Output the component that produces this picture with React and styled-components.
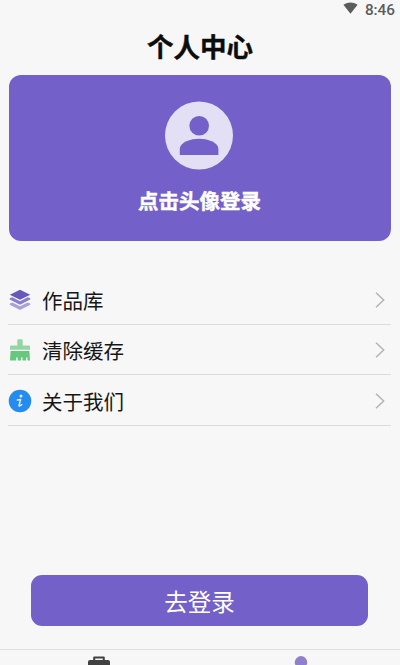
import React from "react";
import styled, { createGlobalStyle } from "styled-components";

const GlobalStyle = createGlobalStyle`
  * {
    box-sizing: border-box;
  }

  body {
    margin: 0;
    background: #f7f7f7;
    font-family: "Roboto", "Noto Sans CJK SC", sans-serif;
  }
`;

const Screen = styled.div`
  width: 400px;
  height: 665px;
  overflow: hidden;
  display: flex;
  flex-direction: column;
  background: #f7f7f7;
`;

const StatusBar = styled.div`
  height: 18px;
  flex-shrink: 0;
  display: flex;
  align-items: center;
  justify-content: flex-end;
  gap: 7px;
  padding-top: 1px;
  padding-right: 5px;
  color: #5c5c5c;
  font-size: 15.3px;
  font-weight: 500;
  line-height: 18px;

  svg {
    display: block;
    margin-bottom: 3px;
  }
`;

const Title = styled.h1`
  height: 57px;
  flex-shrink: 0;
  margin: 0;
  color: #0c0c0c;
  font-family: "Noto Sans CJK SC", sans-serif;
  font-size: 26.5px;
  font-weight: 700;
  line-height: 55px;
  text-align: center;
  -webkit-text-stroke: 0.4px currentColor;
`;

const ProfileCard = styled.div`
  height: 166px;
  flex-shrink: 0;
  margin: 0 9.5px 0 8.5px;
  padding-top: 26px;
  padding-right: 1px;
  display: flex;
  flex-direction: column;
  align-items: center;
  border-radius: 12px;
  background: #7361c9;

  svg {
    display: block;
  }
`;

const LoginHint = styled.div`
  margin-top: 15px;
  margin-left: 1px;
  color: #fff;
  font-family: "Noto Sans CJK SC", sans-serif;
  font-size: 20.5px;
  font-weight: 700;
  line-height: 30px;
  -webkit-text-stroke: 0.4px currentColor;
`;

const Menu = styled.div`
  flex-shrink: 0;
  margin: 33px 9px 0 8px;
`;

const MenuRow = styled.div`
  height: 50.5px;
  display: flex;
  align-items: center;
  padding-top: 2px;
  border-bottom: 1px solid #dcdcdc;

  svg {
    display: block;
    flex-shrink: 0;
  }
`;

const MenuLabel = styled.span`
  flex: 1;
  margin-left: 10px;
  color: #161616;
  font-family: "Noto Sans CJK SC", sans-serif;
  font-size: 20.5px;
  line-height: 30px;
`;

const LoginButton = styled.button`
  height: 51px;
  flex-shrink: 0;
  margin: auto 32px 23px 31px;
  padding: 1px 0 0;
  border: none;
  border-radius: 11px;
  background: #7361c9;
  color: #fff;
  font-family: "Noto Sans CJK SC", sans-serif;
  font-size: 23.5px;
  line-height: 50px;
`;

const TabBar = styled.div`
  height: 16px;
  flex-shrink: 0;
  display: flex;
  border-top: 1px solid #e2e2e2;
`;

const Tab = styled.div`
  flex: 1;
  display: flex;
  justify-content: center;
  padding-top: 6px;
  padding-right: ${(props) => props.$shift || 0}px;
  color: ${(props) => (props.$active ? "#8f7fce" : "#414141")};

  svg {
    display: block;
    flex-shrink: 0;
  }
`;

const WifiIcon = () => (
  <svg width="15" height="12" viewBox="0 0 15 12">
    <path d="M0.4 2.8Q7.5 -2 14.6 2.8L7.5 11.8Z" fill="currentColor" />
  </svg>
);

const AvatarIcon = () => (
  <svg width="68" height="69" viewBox="0 0 68 69">
    <circle cx="34" cy="34.5" r="34" fill="#e3dff4" />
    <circle cx="34.2" cy="24.8" r="9.8" fill="#7361c9" />
    <path
      d="M14.8 54V48C14.8 41 26 37.8 34.1 37.8S53.4 41 53.4 48V54Z"
      fill="#7361c9"
    />
  </svg>
);

const LayersIcon = () => (
  <svg width="24" height="24" viewBox="0 0 24 24">
    <path d="M12 1.8 22.2 6.8 12 11.8 1.8 6.8Z" fill="#6857bd" />
    <path
      d="M1.8 10.3 4.3 9.3 12 13.2 19.7 9.3 22.2 10.3V11.6L12 16.8 1.8 11.6Z"
      fill="#8b7cce"
    />
    <path
      d="M1.8 15.4 4.3 14.4 12 18.3 19.7 14.4 22.2 15.4V16.7L12 22 1.8 16.7Z"
      fill="#aaa0da"
    />
  </svg>
);

const BrushIcon = () => (
  <svg width="24" height="24" viewBox="0 0 24 24">
    <path
      d="M9.3 2.2Q9.3 1.2 10.3 1.2H13.7Q14.7 1.2 14.7 2.2V7.4H21Q22 7.4 22 8.4V11.8H2V8.4Q2 7.4 3 7.4H9.3Z"
      fill="#93d6a2"
    />
    <path
      d="M2.6 13H21.4L22 22.5H19.5V19.5H18V22.5H14.5V19.5H13V22.5H9.7V19.5H8.2V22.5H2Z"
      fill="#67c77e"
    />
  </svg>
);

const InfoIcon = () => (
  <svg width="24" height="24" viewBox="0 0 24 24">
    <circle cx="12" cy="12" r="11.3" fill="#258cee" />
    <circle cx="13" cy="7" r="1.5" fill="#d8ebff" />
    <path
      d="M9.4 11.1 12.6 10.5 11 16.6Q11 17.7 13.8 15.7"
      fill="none"
      stroke="#d8ebff"
      strokeWidth="1.5"
      strokeLinecap="round"
      strokeLinejoin="round"
    />
  </svg>
);

const ChevronIcon = () => (
  <svg width="16" height="20" viewBox="0 0 16 20">
    <path
      d="M1 2.7 8.7 10 1 17.3"
      fill="none"
      stroke="#b4b4b4"
      strokeWidth="1.5"
    />
  </svg>
);

const ToolboxIcon = () => (
  <svg width="22" height="20" viewBox="0 0 22 20">
    <path
      d="M6.2 4.5V1.4H15.8V4.5"
      fill="none"
      stroke="currentColor"
      strokeWidth="2"
      strokeLinejoin="round"
    />
    <path d="M2 4H20Q22 4 22 6V18H0V6Q0 4 2 4Z" fill="currentColor" />
  </svg>
);

const UserIcon = () => (
  <svg width="22" height="20" viewBox="0 0 22 20">
    <circle cx="11" cy="6.3" r="6.2" fill="currentColor" />
  </svg>
);

const menuItems = [
  { label: "作品库", icon: <LayersIcon /> },
  { label: "清除缓存", icon: <BrushIcon /> },
  { label: "关于我们", icon: <InfoIcon /> },
];

const App = () => {
  return (
    <Screen>
      <GlobalStyle />
      <StatusBar>
        <WifiIcon />
        <span>8:46</span>
      </StatusBar>
      <Title>个人中心</Title>
      <ProfileCard>
        <AvatarIcon />
        <LoginHint>点击头像登录</LoginHint>
      </ProfileCard>
      <Menu>
        {menuItems.map((item) => (
          <MenuRow key={item.label}>
            {item.icon}
            <MenuLabel>{item.label}</MenuLabel>
            <ChevronIcon />
          </MenuRow>
        ))}
      </Menu>
      <LoginButton>去登录</LoginButton>
      <TabBar>
        <Tab $shift={4}>
          <ToolboxIcon />
        </Tab>
        <Tab $active>
          <UserIcon />
        </Tab>
      </TabBar>
    </Screen>
  );
};

export default App;
